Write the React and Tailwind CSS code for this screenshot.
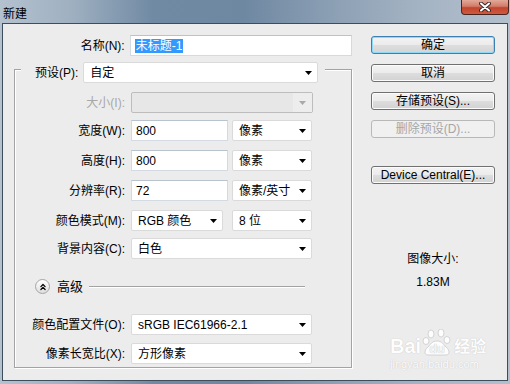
import { ChevronsUp } from "lucide-react";

const Arrow = ({ disabled }) => (
  <svg width="7" height="4" viewBox="0 0 7 4" className="shrink-0">
    <path d="M0 0h7L3.5 4z" fill={disabled ? "#a9a9a9" : "#000"} />
  </svg>
);

function Combo({ value, className = "" }) {
  return (
    <div className={`flex h-[21px] items-center justify-between rounded-[2px] border border-[#dadada] bg-white pl-[6px] pr-[5px] ${className}`}>
      <span>{value}</span>
      <Arrow />
    </div>
  );
}

function Field({ value, className = "" }) {
  return (
    <div className={`flex h-[21px] items-center border border-[#d3dae2] border-t-[#b9c3ce] bg-white pl-[4px] ${className}`}>
      {value}
    </div>
  );
}

function Row({ label, children, className = "", muted }) {
  return (
    <div className={`flex h-[21px] items-center ${className}`}>
      <span className={`w-[110px] text-right ${muted ? "text-[#a8a8a8]" : ""}`}>{label}</span>
      <div className="ml-[6px] flex gap-[4px]">{children}</div>
    </div>
  );
}

function Btn({ children, primary, disabled, className = "" }) {
  let look =
    "border-[#707070] shadow-[inset_0_0_0_1px_#fbfbfb] bg-[linear-gradient(180deg,#f3f3f3_0%,#ebebeb_50%,#dedede_50%,#d2d2d2_100%)]";
  if (primary)
    look =
      "border-[#3c7fb1] shadow-[inset_0_0_0_1px_#8fd9f8] bg-[linear-gradient(180deg,#f3f3f3_0%,#ebebeb_50%,#dedede_50%,#d4d4d4_100%)]";
  if (disabled) look = "border-[#b8b8b8] bg-[#f0f0f0] text-[#a6a6a6]";
  return (
    <div className={`flex h-[18px] w-[124px] items-center justify-center rounded-[3px] border ${look} ${className}`}>
      {children}
    </div>
  );
}

export default function App() {
  return (
    <div className="relative flex h-[384px] w-[510px] flex-col overflow-hidden bg-[linear-gradient(90deg,#b4c1cf_0%,#9fb0c1_14%,#718aa4_30%,#6f88a2_48%,#8a9eb3_64%,#a4b3c3_82%,#b2bfcd_100%)] font-['Liberation_Sans','Noto_Sans_CJK_SC',sans-serif] text-[12px] leading-[16px] text-black">
      {/* title bar */}
      <div className="flex h-[23px] shrink-0 items-start justify-between">
        <span className="ml-[3px] mt-[6px] text-[12px] text-black">新建</span>
        <div className="mr-[1px] flex h-[15px] w-[48px] items-center justify-center rounded-b-[4px] border border-t-0 border-[#4a2520] bg-[linear-gradient(180deg,#e3a999_0%,#d27b68_45%,#c2452e_55%,#cd5a40_100%)]">
          <svg width="12" height="10" viewBox="0 0 12 10">
            <path d="M2 1.5l8 7M10 1.5l-8 7" stroke="#3b2a28" strokeWidth="4" strokeLinecap="round" />
            <path d="M2 1.5l8 7M10 1.5l-8 7" stroke="#fff" strokeWidth="2" strokeLinecap="round" />
          </svg>
        </div>
      </div>

      {/* client area */}
      <div className="mx-[2px] mb-[3px] flex flex-1 border border-[#3e4d5c] bg-[#ececec]">
        {/* left column */}
        <div className="flex w-[349px] flex-col">
          <div className="mt-[11px] flex h-[21px] items-center">
            <span className="w-[122px] text-right">名称(N):</span>
            <Field
              className="ml-[5px] w-[223px] border-[#b8c9db]"
              value={<span className="bg-[#3399ff] px-[1px] leading-[14px] text-white">未标题-1</span>}
            />
          </div>

          {/* group box */}
          <div className="ml-[11px] mt-[13px] flex w-[338px] flex-col border border-[#a3a3a3] pb-[3px] shadow-[inset_1px_1px_0_#fff,1px_1px_0_#fff]">
            <div className="-mt-[8px] ml-[6px] flex items-center self-start bg-[#ececec] pl-[14px] pr-[7px]">
              <span>预设(P):</span>
              <Combo className="ml-[5px] w-[235px]" value="自定" />
            </div>

            <Row label="大小(I):" muted className="mt-[9px]">
              <div className="flex h-[21px] w-[182px] rounded-[2px] border border-[#bdbdbd] bg-[#e7e7e7]">
                <div className="flex-1" />
                <div className="flex w-[19px] items-center justify-center bg-[#ededed]">
                  <Arrow disabled />
                </div>
              </div>
            </Row>
            <Row label="宽度(W):" className="mt-[7px]">
              <Field className="w-[97px]" value="800" />
              <Combo className="w-[80px]" value="像素" />
            </Row>
            <Row label="高度(H):" className="mt-[9px]">
              <Field className="w-[97px]" value="800" />
              <Combo className="w-[80px]" value="像素" />
            </Row>
            <Row label="分辨率(R):" className="mt-[9px]">
              <Field className="w-[97px]" value="72" />
              <Combo className="w-[80px]" value="像素/英寸" />
            </Row>
            <Row label="颜色模式(M):" className="mt-[9px]">
              <Combo className="w-[92px]" value="RGB 颜色" />
              <Combo className="ml-[5px] w-[80px]" value="8 位" />
            </Row>
            <Row label="背景内容(C):" className="mt-[7px]">
              <Combo className="w-[181px]" value="白色" />
            </Row>

            {/* advanced */}
            <div className="ml-[20px] mt-[20px] flex h-[15px] items-center">
              <div className="flex h-[15px] w-[15px] items-center justify-center rounded-full border border-[#a5a5a5] bg-[linear-gradient(180deg,#ffffff,#dedede)]">
                <ChevronsUp size={10} strokeWidth={3} color="#000" />
              </div>
              <span className="ml-[7px] text-[13px]">高级</span>
              <div className="ml-[6px] h-px w-[216px] bg-[#a3a3a3] shadow-[0_1px_0_#fff]" />
            </div>

            <Row label="颜色配置文件(O):" className="mt-[20px]">
              <Combo className="w-[181px]" value="sRGB IEC61966-2.1" />
            </Row>
            <Row label="像素长宽比(X):" className="mt-[8px]">
              <Combo className="w-[181px]" value="方形像素" />
            </Row>
          </div>
        </div>

        {/* right column */}
        <div className="ml-[19px] flex w-[124px] flex-col items-center">
          <Btn primary className="mt-[12px]">确定</Btn>
          <Btn className="mt-[10px]">取消</Btn>
          <Btn className="mt-[10px]">存储预设(S)...</Btn>
          <Btn disabled className="mt-[10px]">删除预设(D)...</Btn>
          <Btn className="mt-[28px]">Device Central(E)...</Btn>
          <span className="mt-[67px]">图像大小:</span>
          <span className="mt-[7px]">1.83M</span>
        </div>
      </div>

      {/* watermark */}
      <div className="pointer-events-none absolute left-[390px] top-[329px] flex flex-col items-start text-white opacity-90 [text-shadow:0_0_1px_#b5b5b5]">
        <div className="flex items-end">
          <span className="text-[20px] font-bold leading-[22px]">Bai</span>
          <span className="relative ml-[1px] flex h-[28px] w-[30px] items-end justify-center">
            <svg width="30" height="28" viewBox="0 0 30 28" className="absolute left-0 top-0">
              <g fill="#fff" stroke="#c8c8c8" strokeWidth="0.8">
                <ellipse cx="9" cy="5" rx="3" ry="4" />
                <ellipse cx="19" cy="4" rx="3" ry="4" />
                <ellipse cx="4" cy="12" rx="3" ry="3.5" />
                <ellipse cx="25" cy="11" rx="3" ry="3.5" />
                <path d="M6 26c-4 0-4-5 0-8 3-3 4-6 9-6s6 3 9 6c4 3 4 8 0 8z" />
              </g>
            </svg>
            <span className="relative text-[13px] font-bold leading-[16px] text-[#f4f4f4]">du</span>
          </span>
          <span className="ml-[2px] text-[16px] font-bold leading-[20px]">经验</span>
        </div>
        <span className="mt-[1px] text-[11px] leading-[12px]">jingyan.baidu.com</span>
      </div>
    </div>
  );
}
